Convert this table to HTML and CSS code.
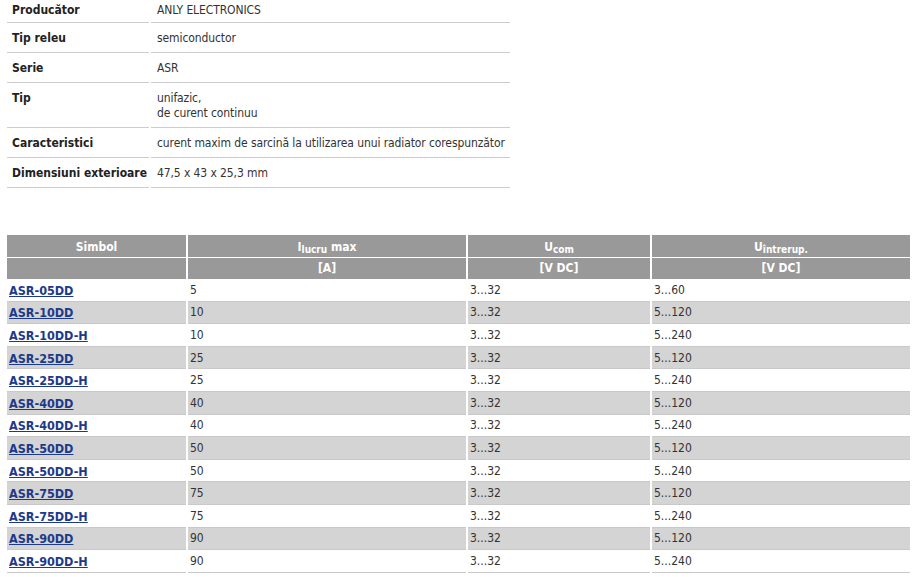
FILE: index.html
```html
<!DOCTYPE html>
<html lang="ro">
<head>
<meta charset="utf-8">
<title>ASR</title>
<link rel="stylesheet" href="styles.css">
</head>
<body>
<div class="page">
  <table class="spec">
    <tr><th>Producător</th><td>ANLY ELECTRONICS</td></tr>
    <tr><th>Tip releu</th><td>semiconductor</td></tr>
    <tr><th>Serie</th><td>ASR</td></tr>
    <tr><th>Tip</th><td>unifazic,<br>de curent continuu</td></tr>
    <tr><th>Caracteristici</th><td>curent maxim de sarcină la utilizarea unui radiator corespunzător</td></tr>
    <tr><th>Dimensiuni exterioare</th><td>47,5 x 43 x 25,3 mm</td></tr>
  </table>

  <table class="products">
    <colgroup>
      <col class="c1"><col class="c2"><col class="c3"><col class="c4">
    </colgroup>
    <thead>
      <tr class="h1">
        <th>Simbol</th>
        <th>I<sub>lucru</sub> max</th>
        <th>U<sub>com</sub></th>
        <th>U<sub>întrerup.</sub></th>
      </tr>
      <tr class="h2">
        <th></th>
        <th>[A]</th>
        <th>[V DC]</th>
        <th>[V DC]</th>
      </tr>
    </thead>
    <tbody>
      <tr><td><a href="#">ASR-05DD</a></td><td>5</td><td>3...32</td><td>3...60</td></tr>
      <tr class="alt"><td><a href="#">ASR-10DD</a></td><td>10</td><td>3...32</td><td>5...120</td></tr>
      <tr><td><a href="#">ASR-10DD-H</a></td><td>10</td><td>3...32</td><td>5...240</td></tr>
      <tr class="alt"><td><a href="#">ASR-25DD</a></td><td>25</td><td>3...32</td><td>5...120</td></tr>
      <tr><td><a href="#">ASR-25DD-H</a></td><td>25</td><td>3...32</td><td>5...240</td></tr>
      <tr class="alt"><td><a href="#">ASR-40DD</a></td><td>40</td><td>3...32</td><td>5...120</td></tr>
      <tr><td><a href="#">ASR-40DD-H</a></td><td>40</td><td>3...32</td><td>5...240</td></tr>
      <tr class="alt"><td><a href="#">ASR-50DD</a></td><td>50</td><td>3...32</td><td>5...120</td></tr>
      <tr><td><a href="#">ASR-50DD-H</a></td><td>50</td><td>3...32</td><td>5...240</td></tr>
      <tr class="alt"><td><a href="#">ASR-75DD</a></td><td>75</td><td>3...32</td><td>5...120</td></tr>
      <tr><td><a href="#">ASR-75DD-H</a></td><td>75</td><td>3...32</td><td>5...240</td></tr>
      <tr class="alt"><td><a href="#">ASR-90DD</a></td><td>90</td><td>3...32</td><td>5...120</td></tr>
      <tr><td><a href="#">ASR-90DD-H</a></td><td>90</td><td>3...32</td><td>5...240</td></tr>
    </tbody>
  </table>
</div>
</body>
</html>
```
FILE: styles.css
```css
html, body {
  margin: 0;
  padding: 0;
  background: #fff;
}
body {
  font-family: "DejaVu Sans Condensed", "DejaVu Sans", sans-serif;
  font-size: 12px;
  color: #333;
  overflow: hidden;
}
.page {
  padding-left: 5px;
}
table {
  border-collapse: separate;
  border-spacing: 2px 0;
}
.spec {
  margin-top: -5px;
  width: 507px;
  table-layout: fixed;
}
.spec th, .spec td {
  text-align: left;
  vertical-align: top;
  line-height: 15px;
  padding: 8px 4px 6px 5px;
  border-bottom: 1px solid #cccccc;
}
.spec tr:first-child th, .spec tr:first-child td {
  padding-bottom: 4px;
}
.spec th {
  width: 142px;
  box-sizing: border-box;
  font-weight: bold;
  color: #222;
  white-space: nowrap;
}
.spec td {
  padding-left: 6px;
  white-space: nowrap;
  letter-spacing: -0.1px;
}

.products {
  margin-top: 47px;
  width: 907px;
  table-layout: fixed;
}
.products col.c1 { width: 179px; }
.products col.c2 { width: 278px; }
.products col.c3 { width: 182px; }
.products col.c4 { width: 258px; }
.products th {
  background: #999999;
  color: #fff;
  font-weight: bold;
  text-align: center;
  padding: 0 2px;
  line-height: 15px;
}
.products .h1 th {
  height: 23px;
  box-sizing: border-box;
  border-bottom: 1px solid #fff;
  padding-top: 5px;
  padding-bottom: 2px;
}
.products .h2 th {
  height: 21px;
  padding-top: 3px;
  padding-bottom: 3px;
  box-sizing: border-box;
}
.products sub {
  font-size: 10px;
  line-height: 0;
  vertical-align: -2px;
}
.products td {
  padding: 3.8px 2px 2.8px;
  line-height: 15px;
  border-bottom: 1px solid #c9c9c9;
  white-space: nowrap;
}
.products td:first-child {
  font-size: 12.5px;
}
.products tr.alt td {
  background: #d4d4d4;
}
.products a {
  color: #1d3a8a;
  font-weight: bold;
  text-decoration: underline;
}
```
